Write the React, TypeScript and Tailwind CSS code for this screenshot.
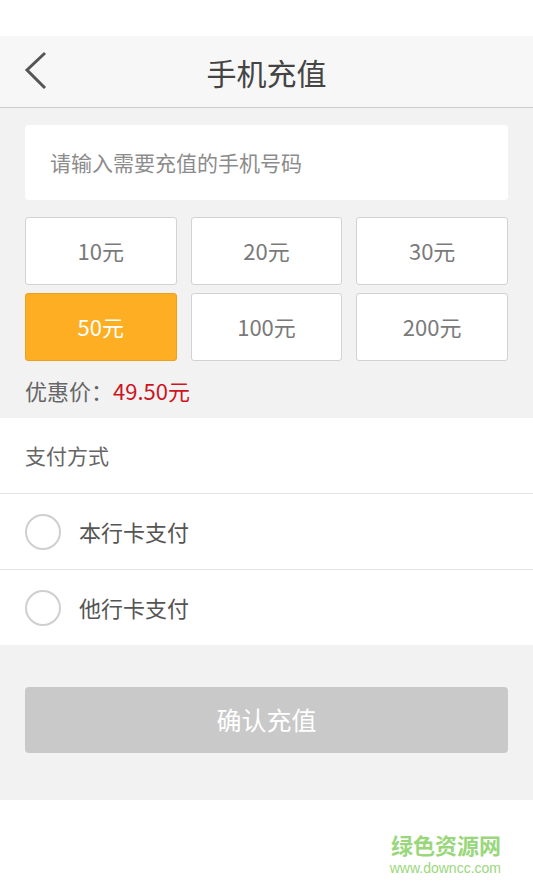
const amounts = ["10元", "20元", "30元", "50元", "100元", "200元"];

const font = { fontFamily: '"Noto Sans CJK SC", "Noto Sans", sans-serif' };

function Radio() {
  return <div className="w-9 h-9 rounded-full border-2 border-[#cfcfcf] shrink-0" />;
}

export default function App() {
  const selected = "50元";
  return (
    <div className="w-[533px] h-[887px] bg-white flex flex-col" style={font}>
      <div className="h-[36px] bg-white" />

      {/* header */}
      <div className="relative h-[72px] bg-[#f7f7f7] border-b border-[#cccccc] flex items-center justify-center">
        <svg className="absolute left-[22px] top-[14px]" width="28" height="40" viewBox="0 0 28 40">
          <path d="M23 3 L5 20 L23 38" fill="none" stroke="#555" strokeWidth="3" />
        </svg>
        <span className="text-[30px] text-[#444] leading-none">手机充值</span>
      </div>

      {/* form */}
      <div className="bg-[#f2f2f2] px-[25px] pt-[17px] pb-[11px]">
        <div className="h-[75px] bg-white rounded-[4px] flex items-center pl-[25px] text-[21px] text-[#8c8c8c]">
          请输入需要充值的手机号码
        </div>
        <div className="grid grid-cols-3 gap-x-[14px] gap-y-[8px] mt-[17px]">
          {amounts.map((a) =>
            a === selected ? (
              <div
                key={a}
                className="h-[68px] rounded-[3px] bg-[#fdae22] border border-[#eba01e] flex items-center justify-center text-[22px] leading-none pb-[3px] text-white"
              >
                {a}
              </div>
            ) : (
              <div
                key={a}
                className="h-[68px] rounded-[3px] bg-white border border-[#d2d2d2] flex items-center justify-center text-[22px] leading-none pb-[3px] text-[#7a7a7a]"
              >
                {a}
              </div>
            )
          )}
        </div>
        <div className="mt-[12px] text-[22px] leading-[34px] text-[#666]">
          优惠价：<span className="text-[#cc1522]">49.50元</span>
        </div>
      </div>

      {/* payment */}
      <div className="bg-white">
        <div className="h-[76px] flex items-center px-[25px] text-[21px] text-[#666] border-b border-[#e3e3e3]">
          支付方式
        </div>
        <div className="h-[76px] flex items-center gap-[18px] px-[25px] text-[22px] text-[#555] border-b border-[#e3e3e3]">
          <Radio />
          本行卡支付
        </div>
        <div className="h-[75px] flex items-center gap-[18px] px-[25px] text-[22px] text-[#555]">
          <Radio />
          他行卡支付
        </div>
      </div>

      {/* confirm */}
      <div className="bg-[#f2f2f2] h-[155px] px-[25px] pt-[42px]">
        <div className="h-[66px] rounded-[4px] bg-[#c9c9c9] flex items-center justify-center text-[25px] text-white">
          确认充值
        </div>
      </div>

      {/* watermark */}
      <div className="flex-1 flex flex-col items-end pr-[32px] pt-[32px]">
        <div className="text-[22px] leading-[24px] font-bold text-[#9ad77c]">绿色资源网</div>
        <div
          className="text-[14px] leading-[15px] text-[#9ad77c] mt-[5px]"
          style={{ fontFamily: '"Liberation Sans", sans-serif' }}
        >
          www.downcc.com
        </div>
      </div>
    </div>
  );
}
